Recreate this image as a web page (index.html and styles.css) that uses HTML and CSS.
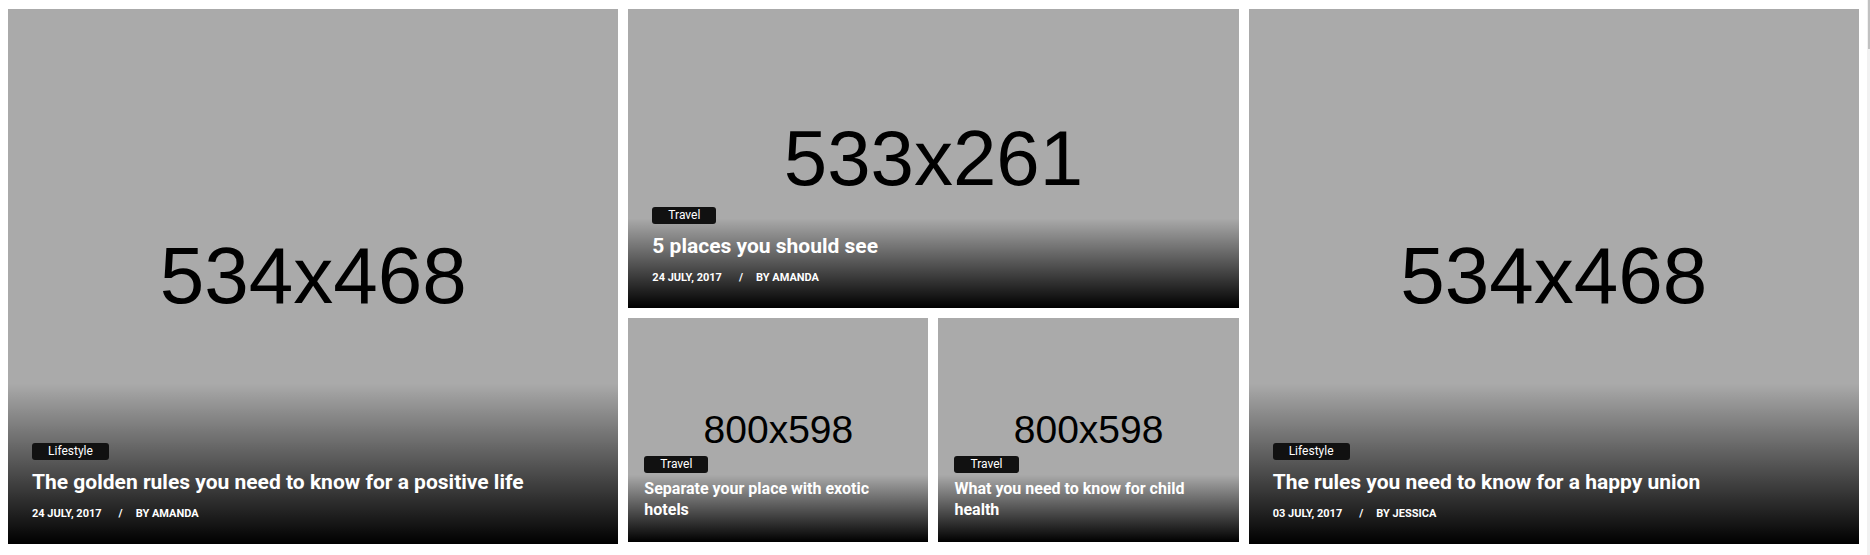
FILE: index.html
```html
<!DOCTYPE html>
<html lang="en">
<head>
    <meta charset="UTF-8">
    <meta name="viewport" content="width=device-width, initial-scale=1.0">
    <title>Featured Posts</title>

<link rel="stylesheet" href="styles.css">

</head>
<body>
    <div class="page">
     <div class="featured">

      <div class="post post-large">
        <div class="thumb">534x468</div>
        <div class="post-content">
          <span class="tag">Lifestyle</span>
          <h2 class="post-title">The golden rules you need to know for a positive life</h2>
          <div class="post-meta"><span>24 July, 2017</span><span class="sep">/</span><span>By Amanda</span></div>
        </div>
      </div>

      <div class="middle">
        <div class="post post-wide">
          <div class="thumb">533x261</div>
          <div class="post-content">
            <span class="tag">Travel</span>
            <h2 class="post-title">5 places you should see</h2>
            <div class="post-meta"><span>24 July, 2017</span><span class="sep">/</span><span>By Amanda</span></div>
          </div>
        </div>

        <div class="small-row">
          <div class="post post-small">
            <div class="thumb">800x598</div>
            <div class="post-content">
              <span class="tag">Travel</span>
              <h2 class="post-title">Separate your place with exotic hotels</h2>
            </div>
          </div>
          <div class="post post-small">
            <div class="thumb">800x598</div>
            <div class="post-content">
              <span class="tag">Travel</span>
              <h2 class="post-title">What you need to know for child health</h2>
            </div>
          </div>
        </div>
      </div>

      <div class="post post-large">
        <div class="thumb">534x468</div>
        <div class="post-content">
          <span class="tag">Lifestyle</span>
          <h2 class="post-title">The rules you need to know for a happy union</h2>
          <div class="post-meta"><span>03 July, 2017</span><span class="sep">/</span><span>By Jessica</span></div>
        </div>
      </div>

     </div>
    </div>

    <div class="scrollbar"><div class="scrollbar-thumb"></div></div>
</body>
</html>
```

FILE: styles.css
```css
 body{
   margin: 0;
   display: flex;
   font-family: Roboto, "Liberation Sans", Arial, sans-serif;
   background-color: #fff;
 }

 .page{
   flex: 1;
   padding: 9px 8px 0 8px;
 }

 .featured{
   display: grid;
   grid-template-columns: repeat(3, 1fr);
   gap: 10px;
   align-items: start;
 }

 .middle{
   display: flex;
   flex-direction: column;
   gap: 10px;
 }

 .small-row{
   display: grid;
   grid-template-columns: 1fr 1fr;
   gap: 10px;
 }

 /* post card */
 .post{
   position: relative;
   overflow: hidden;
   background-color: #aaa;
 }

 .post::after{
   content: "";
   position: absolute;
   inset: 0;
   background: linear-gradient(to bottom, rgba(0, 0, 0, 0) 70%, rgba(0, 0, 0, 1) 100%);
 }

 .post-large{
   aspect-ratio: 534 / 468;
 }

 .post-wide{
   aspect-ratio: 533 / 261;
 }

 .post-small{
   aspect-ratio: 800 / 598;
 }

 .thumb{
   height: 100%;
   display: flex;
   align-items: center;
   justify-content: center;
   font-family: "Liberation Sans", Arial, sans-serif;
   font-size: 80px;
   color: #000;
 }

 .post-wide .thumb{
   font-size: 78px;
 }

 .post-small .thumb{
   font-size: 39px;
 }

 .post-content{
   position: absolute;
   left: 0;
   right: 0;
   bottom: 0;
   z-index: 1;
   padding: 0 24px 22px 24px;
   color: #fff;
 }

 .post-small .post-content{
   padding: 0 16px 22px 16px;
 }

 .tag{
   display: inline-block;
   height: 17px;
   line-height: 17px;
   padding: 0 16px;
   font-size: 12px;
   background-color: #111;
   border-radius: 3px;
   color: #fff;
 }

 .post-title{
   margin: 9px 0 11px 0;
   font-size: 21px;
   line-height: 26px;
   font-weight: 700;
 }

 .post-small .post-title{
   margin: 5px 0 0 0;
   font-size: 16px;
   line-height: 21px;
 }

 .post-meta{
   font-size: 11px;
   line-height: 16px;
   font-weight: 700;
   text-transform: uppercase;
 }

 .sep{
   margin: 0 13px 0 17px;
 }

 .scrollbar{
   width: 3px;
   height: 100vh;
   background-color: #f1f1f1;
 }

 .scrollbar-thumb{
   margin-left: 1px;
   height: 49px;
   background-color: #c1c1c1;
 }
```
